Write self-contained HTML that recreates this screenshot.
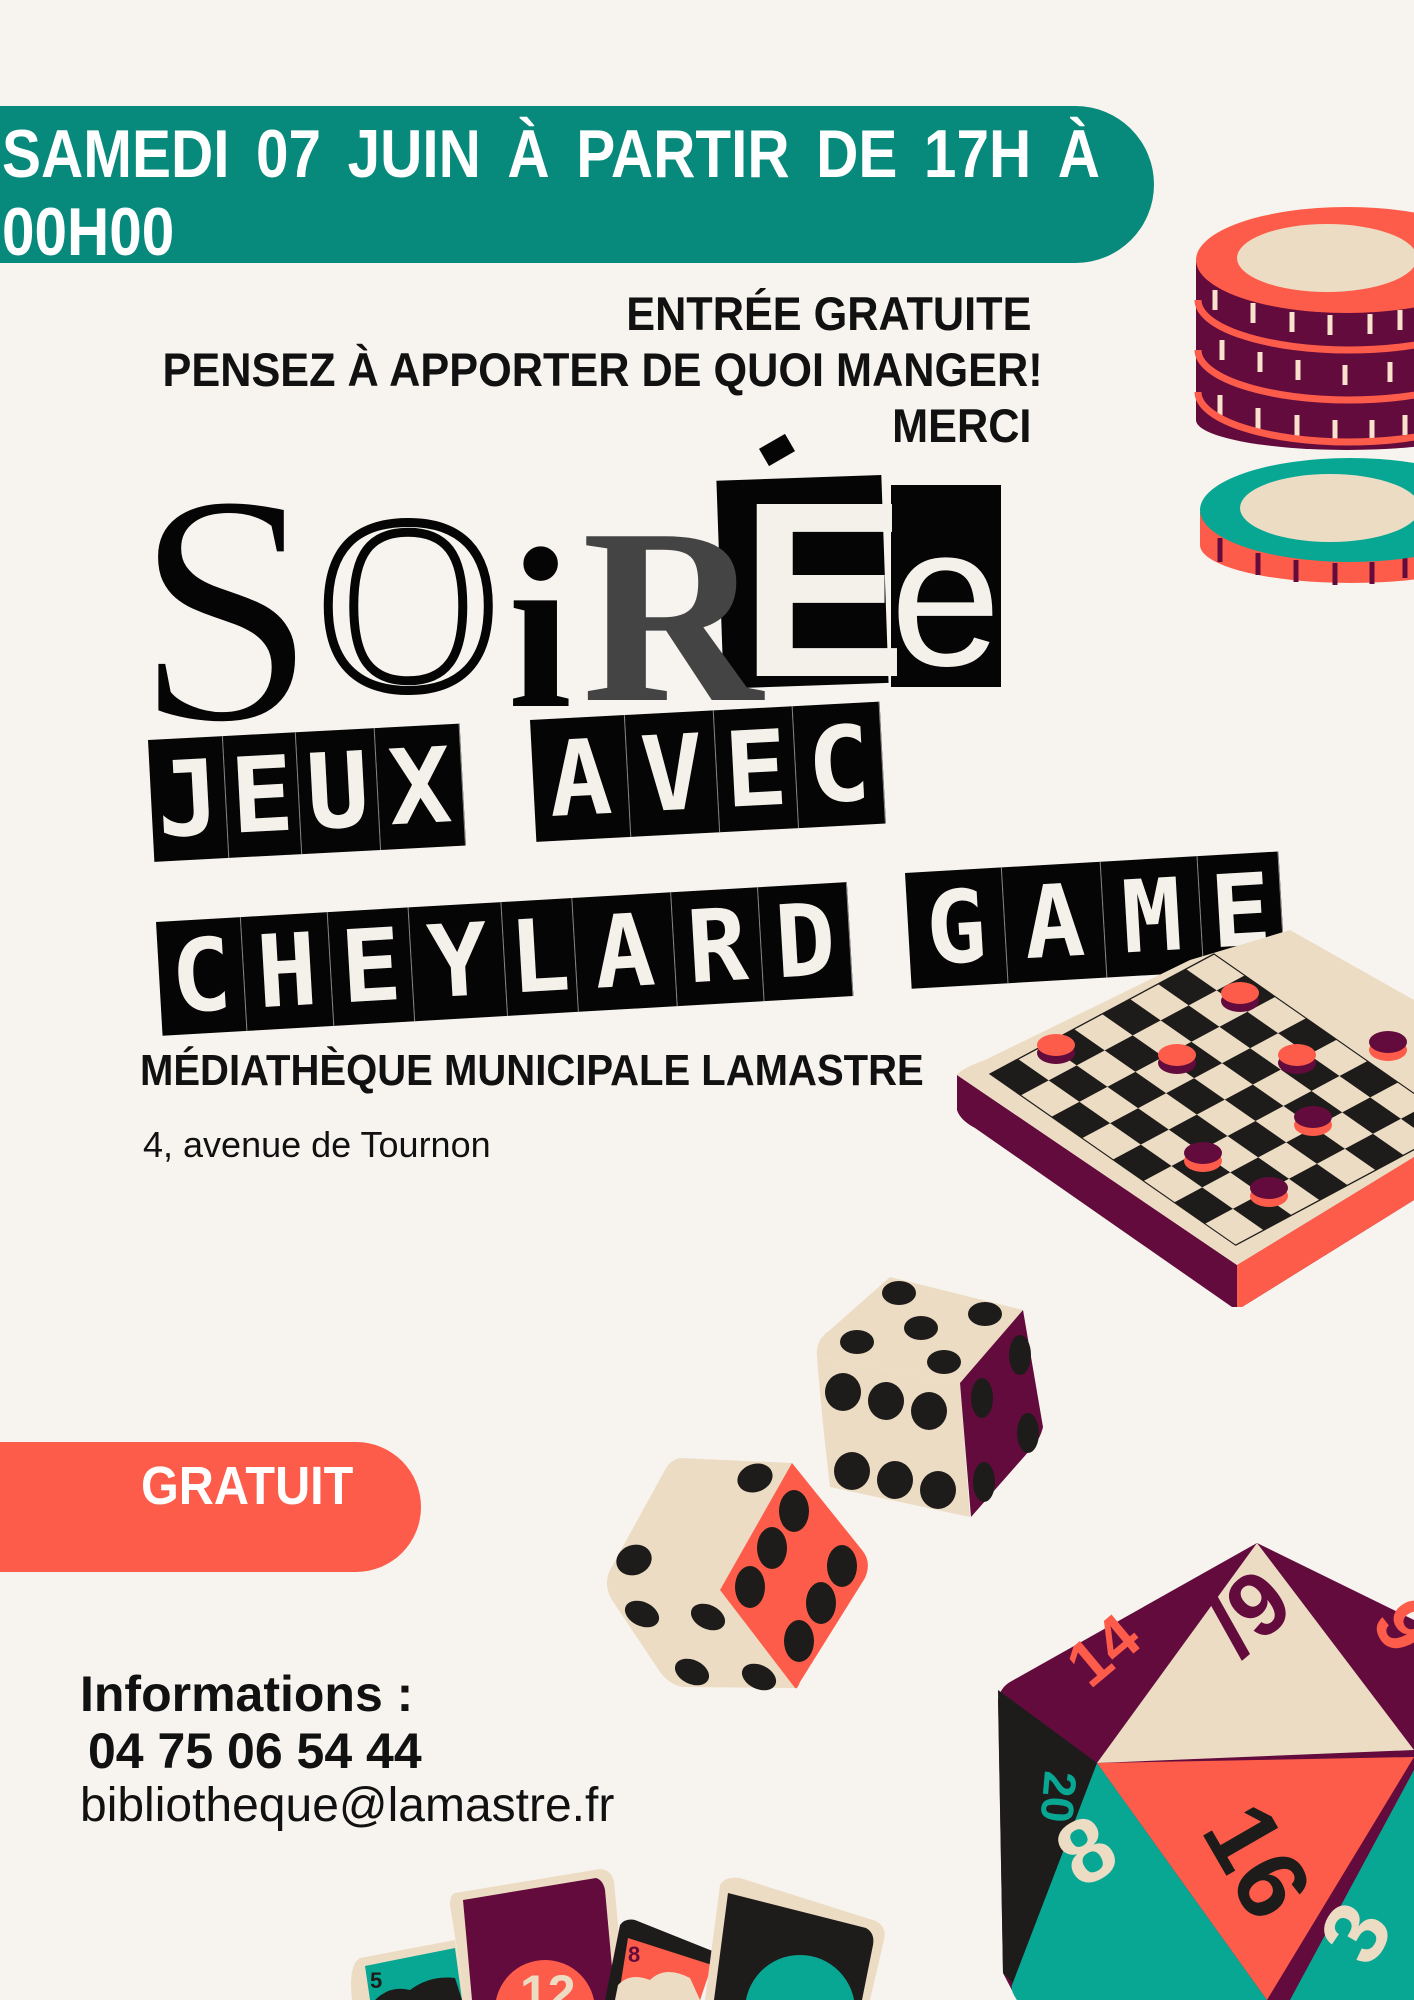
<!DOCTYPE html>
<html><head><meta charset="utf-8"><style>
html,body{margin:0;padding:0}
body{width:1414px;height:2000px;background:#f7f4ef;position:relative;overflow:hidden;font-family:"Liberation Sans",sans-serif}
.a{position:absolute;white-space:nowrap}
.nar{font-family:"Liberation Sans",sans-serif;font-weight:bold}
.banner{position:absolute;left:0;top:106px;width:1154px;height:157px;background:#078a7b;border-radius:0 80px 80px 0}
.btxt{color:#fff;font-size:68px;line-height:56px;transform:scaleX(0.86);transform-origin:left top}
.r{color:#111;font-size:47px;text-align:right;transform:scaleX(0.92);transform-origin:right top}
.box{position:absolute;display:flex}
.box span{display:inline-block;background:#050505;color:#f4f1ea;font-family:"DejaVu Sans Mono",monospace;font-weight:bold;text-align:center;border-right:1px solid #888}
</style></head><body>
<div class="banner"></div>
<div class="a nar btxt" style="left:2px;top:126px;word-spacing:12px">SAMEDI 07 JUIN À PARTIR DE 17H À</div>
<div class="a nar btxt" style="left:2px;top:204px">00H00</div>

<div class="a nar r" style="right:383px;top:286px">ENTRÉE GRATUITE</div>
<div class="a nar r" style="right:371px;top:342px">PENSEZ À APPORTER DE QUOI MANGER!</div>
<div class="a nar r" style="right:383px;top:398px">MERCI</div>

<svg class="a" style="left:0;top:0" width="1414" height="2000">
 <g font-family="Liberation Serif,serif">
  <rect x="720" y="478" width="165" height="208" fill="#050505" transform="rotate(-2 796 582)"/>
  <rect x="891" y="485" width="110" height="202" fill="#050505"/>
  <text x="134" y="720" font-size="330" fill="#050505" stroke="#f7f4ef" stroke-width="4">S</text>
  <text x="318" y="688" font-size="250" fill="none" stroke="#050505" stroke-width="9">O</text>
  <text x="508" y="706" font-size="230" font-weight="bold" fill="#050505">i</text>
  <text x="582" y="700" font-size="250" font-weight="bold" fill="#444">R</text>
  <text x="740" y="676" font-size="250" fill="#f4f1ea" font-family="Liberation Sans,sans-serif" font-weight="bold">E</text>
  <rect x="762" y="440" width="30" height="20" fill="#050505" transform="rotate(-30 777 450)"/>
  <text x="890" y="665" font-size="200" fill="#f4f1ea" font-family="Liberation Sans,sans-serif">e</text>
 </g>
</svg>

<div class="box" style="left:148px;top:740px;transform:rotate(-3deg);transform-origin:left top">
 <span style="width:74px;height:122px;font-size:104px;line-height:122px">J</span><span style="width:72px;height:122px;font-size:104px;line-height:122px">E</span><span style="width:78px;height:122px;font-size:104px;line-height:122px">U</span><span style="width:84px;height:122px;font-size:104px;line-height:122px">X</span>
</div>
<div class="box" style="left:530px;top:720px;transform:rotate(-3deg);transform-origin:left top">
 <span style="width:94px;height:122px;font-size:104px;line-height:122px">A</span><span style="width:88px;height:122px;font-size:104px;line-height:122px">V</span><span style="width:78px;height:122px;font-size:104px;line-height:122px">E</span><span style="width:86px;height:122px;font-size:104px;line-height:122px">C</span>
</div>
<div class="box" style="left:156px;top:922px;transform:rotate(-3.3deg);transform-origin:left top">
 <span style="width:84px;height:114px;font-size:100px;line-height:114px">C</span><span style="width:86px;height:114px;font-size:100px;line-height:114px">H</span><span style="width:80px;height:114px;font-size:100px;line-height:114px">E</span><span style="width:92px;height:114px;font-size:100px;line-height:114px">Y</span><span style="width:70px;height:114px;font-size:100px;line-height:114px">L</span><span style="width:98px;height:114px;font-size:100px;line-height:114px">A</span><span style="width:86px;height:114px;font-size:100px;line-height:114px">R</span><span style="width:88px;height:114px;font-size:100px;line-height:114px">D</span>
</div>
<div class="box" style="left:905px;top:873px;transform:rotate(-3.3deg);transform-origin:left top">
 <span style="width:96px;height:116px;font-size:100px;line-height:116px">G</span><span style="width:98px;height:116px;font-size:100px;line-height:116px">A</span><span style="width:96px;height:116px;font-size:100px;line-height:116px">M</span><span style="width:80px;height:116px;font-size:100px;line-height:116px">E</span>
</div>

<div class="a nar" style="left:140px;top:1046px;font-size:44px;color:#111;transform:scaleX(0.91);transform-origin:left top">MÉDIATHÈQUE MUNICIPALE LAMASTRE</div>
<div class="a" style="left:143px;top:1124px;font-size:36px;color:#111">4, avenue de Tournon</div>

<div class="a" style="left:0;top:1442px;width:421px;height:130px;background:#fd5c4a;border-radius:0 65px 65px 0"></div>
<div class="a nar" style="left:141px;top:1455px;font-size:54px;color:#fff;transform:scaleX(0.9);transform-origin:left top">GRATUIT</div>

<div class="a nar" style="left:80px;top:1665px;font-size:50px;color:#111">Informations :</div>
<div class="a nar" style="left:88px;top:1722px;font-size:50px;color:#111">04 75 06 54 44</div>
<div class="a" style="left:80px;top:1778px;font-size:48px;color:#111">bibliotheque@lamastre.fr</div>

<svg class="a" style="left:0;top:0" width="1414" height="2000">
 <g>
  <path d="M1196 262 L1196 420 A151 30 0 0 0 1498 420 L1498 262 Z" fill="#620b3c"/>
  <g stroke="#f8e2cb" stroke-width="5">
   <line x1="1215" y1="290" x2="1215" y2="310"/><line x1="1253" y1="303" x2="1253" y2="323"/><line x1="1292" y1="312" x2="1292" y2="332"/><line x1="1330" y1="315" x2="1330" y2="335"/><line x1="1370" y1="314" x2="1370" y2="334"/><line x1="1400" y1="310" x2="1400" y2="330"/>
   <line x1="1222" y1="340" x2="1222" y2="360"/><line x1="1260" y1="352" x2="1260" y2="372"/><line x1="1298" y1="360" x2="1298" y2="380"/><line x1="1345" y1="365" x2="1345" y2="385"/><line x1="1390" y1="362" x2="1390" y2="382"/>
   <line x1="1220" y1="395" x2="1220" y2="420"/><line x1="1258" y1="408" x2="1258" y2="430"/><line x1="1297" y1="415" x2="1297" y2="438"/><line x1="1335" y1="420" x2="1335" y2="442"/><line x1="1372" y1="420" x2="1372" y2="440"/><line x1="1405" y1="415" x2="1405" y2="435"/>
  </g>
  <g fill="none" stroke="#fd5c4a" stroke-width="7">
   <path d="M1198 300 A151 50 0 0 0 1500 300"/><path d="M1198 350 A151 50 0 0 0 1500 350"/><path d="M1198 392 A151 50 0 0 0 1500 392"/>
  </g>
  <ellipse cx="1347" cy="260" rx="151" ry="53" fill="#fd5c4a"/>
  <ellipse cx="1327" cy="258" rx="90" ry="34" fill="#eddcc4"/>
  <path d="M1200 512 L1200 545 A151 38 0 0 0 1502 545 L1502 512 Z" fill="#fd5c4a"/>
  <g stroke="#620b3c" stroke-width="5"><line x1="1220" y1="538" x2="1220" y2="562"/><line x1="1258" y1="553" x2="1258" y2="575"/><line x1="1296" y1="560" x2="1296" y2="582"/><line x1="1335" y1="563" x2="1335" y2="585"/><line x1="1372" y1="562" x2="1372" y2="584"/><line x1="1405" y1="555" x2="1405" y2="578"/></g>
  <ellipse cx="1350" cy="510" rx="150" ry="52" fill="#08a793"/>
  <ellipse cx="1330" cy="508" rx="90" ry="34" fill="#eddcc4"/>
 </g>
 <g>
  <path d="M957 1075 L957 1110 Q960 1120 975 1128 L1232 1307 L1242 1307 L1414 1200 L1414 1157 L1237 1265 Z" fill="#620b3c"/>
  <path d="M1237 1265 L1414 1157 L1414 1200 L1242 1307 L1237 1307 Z" fill="#fd5c4a"/>
  <path d="M957 1075 Q962 1068 985 1060 L1190 960 L1290 930 L1414 1000 L1414 1157 L1237 1265 Z" fill="#eddcc4"/>
  <defs><pattern id="ck" width="2" height="2" patternUnits="userSpaceOnUse"><rect width="1" height="1" fill="#1e1c1a"/><rect x="1" y="1" width="1" height="1" fill="#1e1c1a"/></pattern></defs>
  <rect x="0" y="0" width="8" height="8" fill="url(#ck)" stroke="#1e1c1a" stroke-width="0.04" transform="matrix(28,-15,30.7,21.4,990,1074)"/>
  <g>
   <g transform="translate(1056,1045)"><ellipse cy="8" rx="19" ry="11" fill="#620b3c"/><ellipse rx="19" ry="11" fill="#fd5c4a"/></g>
   <g transform="translate(1240,993)"><ellipse cy="8" rx="19" ry="11" fill="#620b3c"/><ellipse rx="19" ry="11" fill="#fd5c4a"/></g>
   <g transform="translate(1177,1055)"><ellipse cy="8" rx="19" ry="11" fill="#620b3c"/><ellipse rx="19" ry="11" fill="#fd5c4a"/></g>
   <g transform="translate(1297,1055)"><ellipse cy="8" rx="19" ry="11" fill="#620b3c"/><ellipse rx="19" ry="11" fill="#fd5c4a"/></g>
   <g transform="translate(1388,1042)"><ellipse cy="8" rx="19" ry="11" fill="#fd5c4a"/><ellipse rx="19" ry="11" fill="#620b3c"/></g>
   <g transform="translate(1313,1117)"><ellipse cy="8" rx="19" ry="11" fill="#fd5c4a"/><ellipse rx="19" ry="11" fill="#620b3c"/></g>
   <g transform="translate(1203,1153)"><ellipse cy="8" rx="19" ry="11" fill="#fd5c4a"/><ellipse rx="19" ry="11" fill="#620b3c"/></g>
   <g transform="translate(1269,1188)"><ellipse cy="8" rx="19" ry="11" fill="#fd5c4a"/><ellipse rx="19" ry="11" fill="#620b3c"/></g>
  </g>
 </g>
 <g fill="#1e1c1a">
  <path d="M890 1277 L1023 1310 L960 1383 L817 1357 Q815 1340 830 1330 Z" fill="#eddcc4"/>
  <path d="M817 1357 L960 1383 L970 1517 L830 1487 Q822 1420 817 1357 Z" fill="#eddcc4"/>
  <path d="M1023 1310 L1043 1427 Q1040 1440 1030 1450 L971 1517 L960 1383 Z" fill="#620b3c"/>
  <ellipse cx="899" cy="1293" rx="17" ry="12"/><ellipse cx="985" cy="1314" rx="17" ry="12"/><ellipse cx="921" cy="1328" rx="17" ry="12"/><ellipse cx="857" cy="1342" rx="17" ry="12"/><ellipse cx="944" cy="1362" rx="17" ry="12"/>
  <ellipse cx="843" cy="1392" rx="18" ry="19"/><ellipse cx="886" cy="1401" rx="18" ry="19"/><ellipse cx="929" cy="1411" rx="18" ry="19"/><ellipse cx="852" cy="1471" rx="18" ry="19"/><ellipse cx="895" cy="1480" rx="18" ry="19"/><ellipse cx="938" cy="1490" rx="18" ry="19"/>
  <ellipse cx="1020" cy="1355" rx="11" ry="20"/><ellipse cx="982" cy="1398" rx="11" ry="20"/><ellipse cx="1028" cy="1433" rx="11" ry="20"/><ellipse cx="984" cy="1482" rx="11" ry="20"/>
 </g>
 <g fill="#1e1c1a">
  <path d="M680 1458 L792 1463 L720 1590 L795 1688 L683 1687 Q670 1685 660 1672 L612 1600 Q603 1585 610 1570 L665 1470 Q670 1460 680 1458 Z" fill="#eddcc4"/>
  <path d="M792 1463 L862 1550 Q872 1562 865 1578 L800 1682 Q797 1690 795 1688 L720 1590 Z" fill="#fd5c4a"/>
  <ellipse cx="755" cy="1478" rx="18" ry="14" transform="rotate(-20 755 1478)"/><ellipse cx="634" cy="1560" rx="18" ry="15" transform="rotate(-20 634 1560)"/><ellipse cx="642" cy="1614" rx="18" ry="12" transform="rotate(25 642 1614)"/><ellipse cx="708" cy="1617" rx="18" ry="12" transform="rotate(25 708 1617)"/><ellipse cx="692" cy="1672" rx="18" ry="12" transform="rotate(25 692 1672)"/><ellipse cx="759" cy="1677" rx="18" ry="12" transform="rotate(25 759 1677)"/>
  <ellipse cx="794" cy="1511" rx="15" ry="21"/><ellipse cx="772" cy="1548" rx="15" ry="21"/><ellipse cx="750" cy="1587" rx="15" ry="21"/><ellipse cx="842" cy="1566" rx="15" ry="21"/><ellipse cx="821" cy="1603" rx="15" ry="21"/><ellipse cx="799" cy="1641" rx="15" ry="21"/>
 </g>
 <g>
  <path d="M1257 1543 L1414 1620 L1414 2000 L1017 2000 L1003 1973 L998 1700 Q1000 1688 1010 1682 Z" fill="#620b3c"/>
  <path d="M998 1690 L1097 1763 L1020 1990 L1003 1973 Z" fill="#1e1c1a"/>
  <path d="M1097 1763 L1267 2000 L1017 2000 Q1010 1990 1012 1985 Z" fill="#08a793"/>
  <path d="M1414 1770 L1290 2000 L1414 2000 Z" fill="#08a793"/>
  <path d="M1257 1543 L1414 1750 L1097 1763 Z" fill="#eddcc4"/>
  <path d="M1097 1763 L1414 1757 L1267 2000 Z" fill="#fd5c4a"/>
  <text font-family="Liberation Sans,sans-serif" font-weight="bold" font-size="64" fill="#fd5c4a" transform="translate(1090,1690) rotate(-40)">14</text>
  <text font-family="Liberation Sans,sans-serif" font-weight="bold" font-size="90" fill="#620b3c" transform="translate(1240,1660) rotate(-40)">/9</text>
  <text font-family="Liberation Sans,sans-serif" font-weight="bold" font-size="46" fill="#08a793" transform="translate(1045,1770) rotate(95)">20</text>
  <text font-family="Liberation Sans,sans-serif" font-weight="bold" font-size="100" fill="#1e1c1a" transform="translate(1200,1830) rotate(60)">16</text>
  <text font-family="Liberation Sans,sans-serif" font-weight="bold" font-size="90" fill="#eddcc4" transform="translate(1080,1890) rotate(-30)">8</text>
  <text font-family="Liberation Sans,sans-serif" font-weight="bold" font-size="80" fill="#fd5c4a" transform="translate(1370,1620) rotate(60)">9</text>
  <text font-family="Liberation Sans,sans-serif" font-weight="bold" font-size="90" fill="#eddcc4" transform="translate(1370,1970) rotate(-60)">3</text>
 </g>
 <g>
  <path d="M360 1958 L455 1940 L465 2000 L352 2000 Q348 1965 360 1958 Z" fill="#eddcc4"/>
  <path d="M365 1966 L455 1948 L462 2000 L370 2000 Z" fill="#08a793"/>
  <path d="M375 2000 Q390 1985 410 1990 Q430 1975 455 1978 L462 2000 Z" fill="#1e1c1a"/>
  <text x="370" y="1988" font-family="Liberation Sans,sans-serif" font-weight="bold" font-size="22" fill="#1e1c1a">5</text>
  <path d="M455 1893 L600 1869 Q612 1870 614 1882 L625 2000 L465 2000 L450 1905 Q450 1895 455 1893 Z" fill="#eddcc4"/>
  <path d="M463 1900 L596 1878 Q603 1880 605 1890 L615 2000 L472 2000 Z" fill="#620b3c"/>
  <circle cx="545" cy="2010" r="50" fill="#fd5c4a"/>
  <text x="520" y="2010" font-family="Liberation Sans,sans-serif" font-weight="bold" font-size="50" fill="#eddcc4">12</text>
  <path d="M620 1925 Q625 1918 635 1920 L715 1952 L700 2000 L605 2000 Z" fill="#1e1c1a"/>
  <path d="M628 1938 L712 1965 L700 2000 L618 2000 Z" fill="#fd5c4a"/>
  <path d="M618 1985 Q630 1972 650 1980 Q665 1965 690 1978 L700 2000 L615 2000 Z" fill="#eddcc4"/>
  <text x="628" y="1962" font-family="Liberation Sans,sans-serif" font-weight="bold" font-size="22" fill="#620b3c">8</text>
  <path d="M720 1885 Q725 1876 740 1878 L876 1921 Q887 1927 884 1940 L870 2000 L705 2000 Z" fill="#eddcc4"/>
  <path d="M728 1893 L866 1928 Q875 1933 873 1945 L862 2000 L714 2000 Z" fill="#1e1c1a"/>
  <circle cx="800" cy="2010" r="55" fill="#08a793"/>
 </g>
</svg>
</body></html>
